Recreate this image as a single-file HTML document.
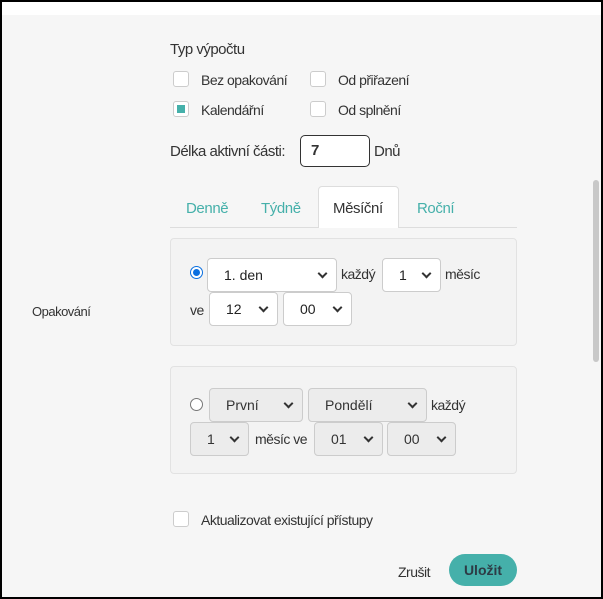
<!DOCTYPE html><html><head><style>
*{box-sizing:border-box;margin:0;padding:0}
body{width:603px;height:599px;background:#000;font-family:"Liberation Sans",sans-serif;font-size:14px;color:#333;position:relative;overflow:hidden}
#w{position:absolute;left:2px;top:2px;width:599px;height:595px;background:#f6f6f6}
#top{position:absolute;left:0;top:0;width:599px;height:13px;background:#fff}
.a{position:absolute;white-space:nowrap;letter-spacing:-0.5px}
.cb{position:absolute;width:16px;height:16px;border:1px solid #ccc;border-radius:3px;background:#fff}
.sel{position:absolute;height:34px;border:1px solid #ccc;border-radius:4px;background:#fff;font-size:14px;color:#222;line-height:32px;padding-left:16px}
.sel.g{background:#ececec;color:#333}
.sel:after{content:"";position:absolute;right:10px;top:11px;width:5px;height:5px;border-right:2px solid #333;border-bottom:2px solid #333;transform:rotate(45deg)}
.box{position:absolute;left:168px;width:347px;border:1px solid #e2e2e2;border-radius:4px;background:#f3f3f3}
.tab{position:absolute;top:198px;color:#45b0aa;font-size:15px;letter-spacing:-0.4px}
</style></head><body><div id="w">
<div id="top"></div>
<div class="a" style="left:168px;top:39px;font-size:15px">Typ výpočtu</div>
<div class="cb" style="left:171px;top:69px"></div><div class="a" style="left:199px;top:70px">Bez opakování</div>
<div class="cb" style="left:308px;top:69px"></div><div class="a" style="left:336px;top:70px">Od přiřazení</div>
<div class="cb" style="left:171px;top:99px"><div style="position:absolute;left:3px;top:3px;width:8px;height:8px;background:#45b0aa"></div></div><div class="a" style="left:199px;top:100px">Kalendářní</div>
<div class="cb" style="left:308px;top:99px"></div><div class="a" style="left:336px;top:100px">Od splnění</div>
<div class="a" style="left:168px;top:141px;font-size:15px">Délka aktivní části:</div>
<div style="position:absolute;left:298px;top:133px;width:70px;height:32px;border:1px solid #333;border-radius:5px;background:#fff;font-weight:bold;font-size:15px;line-height:30px;padding-left:10px">7</div>
<div class="a" style="left:372px;top:141px;font-size:15px">Dnů</div>
<div style="position:absolute;left:168px;top:225px;width:347px;height:1px;background:#ddd"></div>
<div style="position:absolute;left:316px;top:184px;width:81px;height:42px;background:#fff;border:1px solid #ddd;border-bottom:none;border-radius:4px 4px 0 0"></div>
<div class="tab" style="left:184px">Denně</div><div class="tab" style="left:259px">Týdně</div>
<div class="tab" style="left:331px;color:#333">Měsíční</div><div class="tab" style="left:415px">Roční</div>
<div class="a" style="left:30px;top:302px;font-size:13px">Opakování</div>
<div class="box" style="top:236px;height:108px"></div>
<div style="position:absolute;left:188px;top:264px;width:13px;height:13px;border-radius:50%;border:1px solid #0a6fe0;background:#fff"><div style="position:absolute;left:2px;top:2px;width:7px;height:7px;border-radius:50%;background:#0a6fe0"></div></div>
<div class="sel" style="left:205px;top:256px;width:130px">1. den</div>
<div class="a" style="left:339px;top:264px">každý</div>
<div class="sel" style="left:380px;top:256px;width:59px">1</div>
<div class="a" style="left:443px;top:264px">měsíc</div>
<div class="a" style="left:188px;top:300px">ve</div>
<div class="sel" style="left:207px;top:290px;width:69px">12</div>
<div class="sel" style="left:281px;top:290px;width:69px">00</div>
<div class="box" style="top:364px;height:108px"></div>
<div style="position:absolute;left:188px;top:396px;width:13px;height:13px;border-radius:50%;border:1px solid #777;background:#fff"></div>
<div class="sel g" style="left:207px;top:386px;width:94px">První</div>
<div class="sel g" style="left:306px;top:386px;width:119px">Pondělí</div>
<div class="a" style="left:429px;top:395px">každý</div>
<div class="sel g" style="left:188px;top:420px;width:59px">1</div>
<div class="a" style="left:253px;top:429px">měsíc ve</div>
<div class="sel g" style="left:312px;top:420px;width:69px">01</div>
<div class="sel g" style="left:385px;top:420px;width:69px">00</div>
<div class="cb" style="left:171px;top:509px"></div><div class="a" style="left:199px;top:510px">Aktualizovat existující přístupy</div>
<div class="a" style="left:396px;top:562px">Zrušit</div>
<div style="position:absolute;left:447px;top:552px;width:68px;height:32px;border-radius:16px;background:#45b0aa;color:#2d3b45;font-weight:bold;font-size:14px;line-height:32px;text-align:center">Uložit</div>
<div style="position:absolute;left:591px;top:178px;width:6px;height:182px;border-radius:3px;background:#c8c8c8"></div>
</div></body></html>
